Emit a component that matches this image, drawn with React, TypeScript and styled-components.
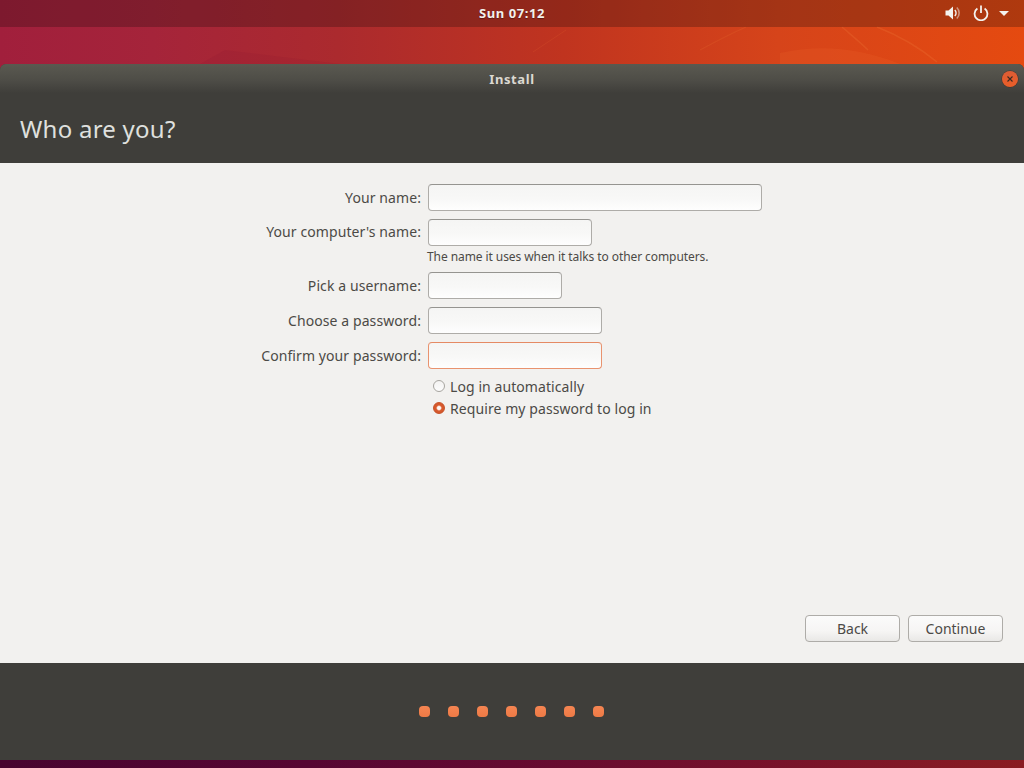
import React from "react";
import styled, { createGlobalStyle } from "styled-components";

const Global = createGlobalStyle`
  html, body { margin: 0; padding: 0; width: 1024px; height: 768px; overflow: hidden; }
  body { font-family: "Noto Sans", "Open Sans", sans-serif; }
  * { box-sizing: border-box; }
`;

const Desktop = styled.div`
  position: relative;
  width: 1024px;
  height: 768px;
  overflow: hidden;
  display: flex;
  flex-direction: column;
  background:
    linear-gradient(90deg, #48042f 0%, #560632 30%, #640a30 50%, #73102c 70%, #8a1c22 100%) bottom / 100% 8px no-repeat,
    linear-gradient(90deg, #a11f3c 0%, #a5243a 15%, #ab2a2e 33%, #c0341f 55%, #d6441a 76%, #e54a10 100%);
`;

const Swirls = styled.svg`
  position: absolute;
  left: 0;
  top: 0;
  width: 1024px;
  height: 768px;
`;

const TopBar = styled.header`
  position: relative;
  height: 27px;
  flex: none;
  background: rgba(30, 10, 10, 0.27);
  display: flex;
  align-items: center;
  justify-content: center;
  color: #f2f0ec;
  font-size: 13px;
  font-weight: 700;
  letter-spacing: 0.6px;
  text-shadow: 0 1px 1px rgba(0, 0, 0, 0.35);
`;

const Clock = styled.span`
  line-height: 27px;
`;

const Tray = styled.div`
  position: absolute;
  right: 15px;
  top: 5px;
  display: flex;
  align-items: center;
  gap: 10px;
`;

const Win = styled.main`
  position: relative;
  margin-top: 37px;
  height: 696px;
  display: flex;
  flex-direction: column;
  border-radius: 6px 6px 0 0;
  overflow: hidden;
  background: #3f3e3a;
`;

const TitleBar = styled.div`
  position: relative;
  height: 29px;
  flex: none;
  background: linear-gradient(180deg, #5a5950 0%, #4e4d47 55%, #3f3e3a 100%);
  display: flex;
  align-items: center;
  justify-content: center;
  color: #dcd9d2;
  font-size: 13px;
  font-weight: 700;
  letter-spacing: 0.6px;
`;

const CloseButton = styled.div`
  position: absolute;
  right: 6px;
  top: 7px;
  width: 16px;
  height: 16px;
  border-radius: 50%;
  background: linear-gradient(180deg, #dc5c35 0%, #ea5e28 100%);
  box-shadow: 0 0 0 0.5px rgba(60, 30, 20, 0.6);
  display: flex;
  align-items: center;
  justify-content: center;
`;

const Header = styled.div`
  height: 70px;
  flex: none;
  padding: 0 0 0 20px;
  display: flex;
  align-items: flex-start;
  background: #3f3e3a;
`;

const Heading = styled.h1`
  margin: 18px 0 0;
  font-size: 24px;
  line-height: 36px;
  font-weight: 400;
  color: #dfe0de;
  letter-spacing: 0.25px;
`;

const Content = styled.section`
  height: 500px;
  flex: none;
  background: #f2f1ef;
  display: flex;
  flex-direction: column;
  padding: 21px 21px 21px 0;
`;

const Form = styled.div`
  display: grid;
  grid-template-columns: 421px 1fr;
  column-gap: 7px;
  align-items: center;
`;

const Label = styled.label<{ $lift?: boolean }>`
  text-align: right;
  font-size: 14px;
  line-height: ${(p) => (p.$lift ? 25 : 27)}px;
  letter-spacing: 0.09px;
  color: #4c4a46;
  margin-bottom: ${(p) => (p.$lift ? 2 : 0)}px;
`;

const Field = styled.div<{ $w: number; $bad?: boolean }>`
  width: ${(p) => p.$w}px;
  height: 27px;
  border-radius: 4px;
  border: 1px solid ${(p) => (p.$bad ? "#e9936f" : "#aeaca8")};
  border-top-color: ${(p) => (p.$bad ? "#e58a64" : "#959490")};
  background: linear-gradient(180deg, #f5f5f4 0%, #f8f8f7 55%, #fefefe 100%);
`;

const Hint = styled.div`
  grid-column: 2;
  margin-left: -1px;
  margin-top: 3px;
  margin-bottom: 8px;
  font-size: 12px;
  line-height: 15px;
  letter-spacing: -0.08px;
  color: #4c4a46;
`;

const RowGap = styled.div`
  grid-column: 1 / -1;
  height: 8px;
`;

const Radios = styled.div`
  grid-column: 2;
  margin-top: 6px;
  display: flex;
  flex-direction: column;
`;

const RadioRow = styled.div`
  display: flex;
  align-items: center;
  height: 22px;
  padding-left: 5px;
  gap: 5px;
  font-size: 14px;
  letter-spacing: 0.08px;
  color: #4c4a46;
`;

const RadioDot = styled.span<{ $on?: boolean }>`
  width: 12px;
  height: 12px;
  border-radius: 50%;
  flex: none;
  background: ${(p) =>
    p.$on
      ? "radial-gradient(circle, #fff 0, #fbeee8 1.6px, #d8592c 3px, #d2562a 100%)"
      : "linear-gradient(180deg, #f4f3f2, #fcfcfc)"};
  border: 1px solid ${(p) => (p.$on ? "#c65228" : "#a7a5a0")};
`;

const Actions = styled.div`
  margin-top: auto;
  display: flex;
  justify-content: flex-end;
  gap: 8px;
`;

const Button = styled.button`
  width: 95px;
  height: 27px;
  padding: 0;
  border: 1px solid #aeaca8;
  border-radius: 4px;
  background: linear-gradient(180deg, #fbfbfb 0%, #f6f5f4 60%, #e9e8e6 100%);
  font-family: inherit;
  font-size: 14px;
  color: #4c4a46;
`;

const Footer = styled.footer`
  flex: 1;
  background: #3f3e3a;
  display: flex;
  justify-content: center;
  align-items: flex-start;
  gap: 18px;
  padding: 43px 1px 0 0;
`;

const Dot = styled.span`
  width: 11px;
  height: 11px;
  border-radius: 4px;
  background: linear-gradient(180deg, #f58552, #ee7a45);
`;

export default function App() {
  return (
    <Desktop>
      <Global />
      <Swirls viewBox="0 0 1024 768" fill="none">
        <path d="M780 53 C 820 44 860 48 900 64 L 780 64 Z" fill="#f0722f" fillOpacity="0.16" />
        <path d="M842 27 C 850 34 860 42 868 50" stroke="#f07a3a" strokeOpacity="0.25" strokeWidth="1.5" />
        <path d="M877 27 C 900 36 920 48 937 62" stroke="#f07a3a" strokeOpacity="0.25" strokeWidth="1.5" />
        <path d="M700 50 C 715 42 730 34 746 27" stroke="#f07a3a" strokeOpacity="0.18" strokeWidth="1.2" />
        <path d="M533 52 L 566 30" stroke="#e86a30" strokeOpacity="0.18" strokeWidth="1" />
        <path d="M200 64 L 225 50 L 340 64 Z" fill="#8a1530" fillOpacity="0.14" />
      </Swirls>
      <TopBar>
        <Clock>Sun 07:12</Clock>
        <Tray>
          <svg width="16" height="16" viewBox="0 0 16 16">
            <path d="M0.5 5.5h3L8 1.5v13L3.5 10.5h-3z" fill="#f4f2ee" />
            <path d="M9.8 5a4.2 4.2 0 0 1 0 6" stroke="#f4f2ee" strokeWidth="1.4" fill="none" />
            <path d="M11.8 2.5a7.6 7.6 0 0 1 0 11" stroke="#f4f2ee" strokeOpacity="0.5" strokeWidth="1.6" fill="none" />
          </svg>
          <svg width="16" height="16" viewBox="0 0 16 16" style={{ marginLeft: 2 }}>
            <path d="M4.4 3.6a6.4 6.4 0 1 0 7.2 0" stroke="#f4f2ee" strokeWidth="1.8" fill="none" />
            <path d="M8 0.5v7.5" stroke="#f4f2ee" strokeWidth="1.8" />
          </svg>
          <svg width="10" height="5" viewBox="0 0 10 5">
            <path d="M0 0h10L5 5z" fill="#f4f2ee" />
          </svg>
        </Tray>
      </TopBar>
      <Win>
        <TitleBar>
          Install
          <CloseButton>
            <svg width="8" height="8" viewBox="0 0 8 8">
              <path d="M1.5 1.5l5 5M6.5 1.5l-5 5" stroke="#3a2a22" strokeWidth="1.1" />
            </svg>
          </CloseButton>
        </TitleBar>
        <Header>
          <Heading>Who are you?</Heading>
        </Header>
        <Content>
          <Form>
            <Label>Your name:</Label>
            <Field $w={334} />
            <RowGap />
            <Label $lift>Your computer's name:</Label>
            <Field $w={164} />
            <Hint>The name it uses when it talks to other computers.</Hint>
            <Label>Pick a username:</Label>
            <Field $w={134} />
            <RowGap />
            <Label>Choose a password:</Label>
            <Field $w={174} />
            <RowGap />
            <Label>Confirm your password:</Label>
            <Field $w={174} $bad />
            <Radios>
              <RadioRow>
                <RadioDot />
                Log in automatically
              </RadioRow>
              <RadioRow>
                <RadioDot $on />
                Require my password to log in
              </RadioRow>
            </Radios>
          </Form>
          <Actions>
            <Button>Back</Button>
            <Button>Continue</Button>
          </Actions>
        </Content>
        <Footer>
          {Array.from({ length: 7 }).map((_, i) => (
            <Dot key={i} />
          ))}
        </Footer>
      </Win>
    </Desktop>
  );
}
